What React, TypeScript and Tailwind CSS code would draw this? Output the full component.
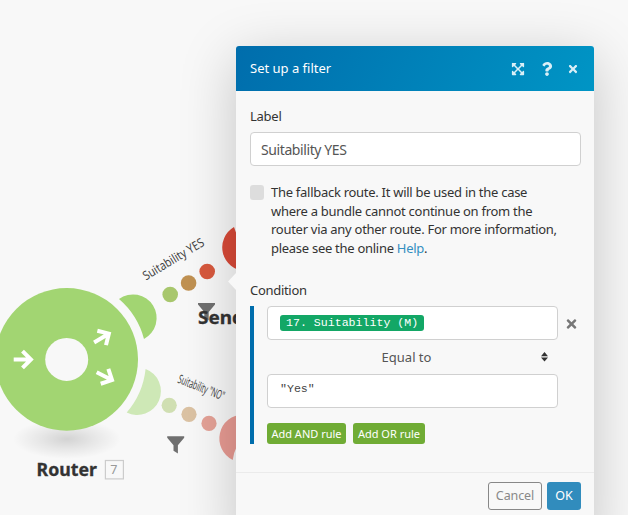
import React from "react";
import { FaExpandArrowsAlt, FaQuestion, FaTimes } from "react-icons/fa";

function Funnel({ x, y }: { x: number; y: number }) {
  return (
    <path
      transform={`translate(${x} ${y})`}
      d="M0 0H17V1.6L10.7 9V17.2L6.3 14.6V9L0 1.6Z"
      fill="#707070"
    />
  );
}

function Arrow({ transform }: { transform: string }) {
  return (
    <path
      transform={transform}
      d="M-10 0H7M-1.2 -8.4L7.2 0L-1.2 8.4"
      fill="none"
      stroke="#fff"
      strokeWidth="4"
    />
  );
}

function Scenario() {
  return (
    <svg
      className="block h-[515px] w-[628px] font-['Noto_Sans',sans-serif]"
      viewBox="0 0 628 515"
    >
      <defs>
        <radialGradient id="ground">
          <stop offset="0" stopColor="#000" stopOpacity=".15" />
          <stop offset=".5" stopColor="#000" stopOpacity=".07" />
          <stop offset="1" stopColor="#000" stopOpacity="0" />
        </radialGradient>
      </defs>
      <ellipse cx="67" cy="439" rx="54" ry="20" fill="url(#ground)" />
      <circle cx="66.7" cy="359.4" r="71.3" fill="#a2d572" />
      <circle cx="66.7" cy="359.4" r="21.5" fill="#f8f8f8" />
      <Arrow transform="translate(23.7 359.5)" />
      <Arrow transform="translate(102.7 337.3) rotate(-31)" />
      <Arrow transform="translate(105.6 376.8) rotate(27)" />

      <path d="M119 299A23.65 23.65 0 1 1 144 339A79.6 79.6 0 0 0 119 299Z" fill="#a2d572" />
      <path d="M145.6 369A23.74 23.74 0 1 1 126.7 412.5A79.6 79.6 0 0 0 145.6 369Z" fill="#cee8b6" />

      <circle cx="170.2" cy="294.5" r="7.8" fill="#a8c76d" />
      <circle cx="188.6" cy="283" r="7.8" fill="#c09152" />
      <circle cx="207.2" cy="271.5" r="7.8" fill="#d8593e" />
      <circle cx="169.2" cy="405.3" r="7.6" fill="#d0dfb2" />
      <circle cx="189" cy="414.3" r="7.6" fill="#dbc2a3" />
      <circle cx="209" cy="423.4" r="7.6" fill="#e5a297" />

      <path d="M234 227A23.6 23.6 0 0 0 245 271V247Q238 240 234 227Z" fill="#d94a38" />
      <path d="M243 414.5A24 24 0 0 0 232.7 460Q233.5 453 237 446L246 430Z" fill="#e89b93" />

      <Funnel x={198} y={303} />
      <Funnel x={167.2} y={436.2} />

      <g fill="#444" fontSize="12.5">
        <text transform="translate(146 280.5) rotate(-31)" textLength="69" lengthAdjust="spacingAndGlyphs">
          Suitability YES
        </text>
        <text transform="translate(177 382.5) rotate(21.5)" textLength="49" lengthAdjust="spacingAndGlyphs">
          Suitability "NO"
        </text>
      </g>
      <g fill="#333" stroke="#333" strokeWidth=".3" fontSize="18.3" fontWeight="700">
        <text x="198" y="323.5" textLength="46" lengthAdjust="spacingAndGlyphs">Send</text>
        <text x="36.5" y="475.5" textLength="60.5" lengthAdjust="spacingAndGlyphs">Router</text>
      </g>
      <rect x="105.4" y="460.5" width="18" height="18.4" fill="none" stroke="#ccc" strokeWidth="1.2" />
      <text x="110.2" y="474.3" fontSize="12.5" fill="#999">7</text>
    </svg>
  );
}

function FilterPanel() {
  return (
    <section className="absolute left-[236px] top-[46px] flex h-[500px] w-[358px] flex-col rounded-[3px] bg-[#f8f8f8] text-[13px] text-[#333] shadow-[0_12px_56px_rgba(0,0,0,0.21)]">
      <span className="absolute -left-[8px] top-[227px] h-[17px] w-[8px] bg-[#f8f8f8] [clip-path:polygon(100%_0,0_50%,100%_100%)]" />
      <header className="flex h-[45px] shrink-0 items-center rounded-t-[3px] bg-[linear-gradient(117deg,#006dac,#0095c5)] pl-[14px] pr-[15px] text-white">
        <h1 className="flex-1">Set up a filter</h1>
        <div className="flex items-center text-[#d9eff7]">
          <FaExpandArrowsAlt className="mr-[15px] h-[14px] w-[14px]" />
          <FaQuestion className="mr-[13px] h-[14px] w-[14px]" />
          <FaTimes className="h-[12px] w-[12px]" />
        </div>
      </header>

      <div className="flex h-[382px] shrink-0 flex-col border-b border-[#ebebeb] pl-[14px]">
        <label className="mt-[16px] h-[18px] leading-[18px] tracking-[-0.25px]">Label</label>
        <div className="mt-[7px] flex h-[34px] w-[331px] items-center rounded-[4px] border border-[#d0d0d0] bg-white px-[10px] text-[14px] tracking-[-0.4px] text-[#555]">
          Suitability YES
        </div>

        <div className="mt-[17px] flex">
          <span className="mt-[2px] h-[15px] w-[14px] shrink-0 rounded-[3px] bg-[#ddd]" />
          <p className="ml-[7px] whitespace-nowrap leading-[18.6px] tracking-[-0.28px]">
            The fallback route. It will be used in the case
            <br />
            where a bundle cannot continue on from the
            <br />
            router via any other route. For more information,
            <br />
            please see the online <a className="text-[#338fc1]">Help</a>.
          </p>
        </div>

        <h2 className="mt-[24px] h-[18px] leading-[18px] tracking-[-0.3px]">Condition</h2>
        <div className="mt-[7px] flex h-[138px] border-l-4 border-[#006dac] pl-[13px]">
          <div className="w-[291px]">
            <div className="flex h-[34px] items-start rounded-[4px] border border-[#d0d0d0] bg-white pl-[12px] pt-[8px]">
              <span className="h-[16px] w-[144px] whitespace-nowrap rounded-[3px] bg-[#13a766] pl-[6px] font-['Liberation_Mono',monospace] text-[11.6px] leading-[16px] text-white">
                17. Suitability (M)
              </span>
            </div>
            <div className="flex h-[34px] items-center pr-[9px] text-[#555]">
              <span className="flex-1 pl-[5px] text-center">Equal to</span>
              <svg className="h-[10px] w-[8px]" viewBox="0 0 8 10" fill="#333">
                <path d="M3.5 0L7 4.2H0ZM3.5 9.6L7 5.6H0Z" />
              </svg>
            </div>
            <div className="h-[34px] rounded-[4px] border border-[#d0d0d0] bg-white pl-[12px] pt-[5px] font-['Liberation_Mono',monospace] text-[11.6px] leading-[17px] text-[#444]">
              "Yes"
            </div>
            <div className="mt-[15px] flex gap-[7px] text-[11px] text-white">
              <button className="h-[21px] w-[79px] whitespace-nowrap rounded-[3px] bg-[#70ac35] leading-[21px]">
                Add AND rule
              </button>
              <button className="h-[21px] w-[72px] whitespace-nowrap rounded-[3px] bg-[#70ac35] leading-[21px]">
                Add OR rule
              </button>
            </div>
          </div>
          <FaTimes className="ml-[6px] mt-[11px] h-[14px] w-[15px] text-[#777]" />
        </div>
      </div>

      <footer className="flex justify-end gap-[5px] pr-[13px] pt-[9px] text-[12.5px]">
        <button className="h-[28px] w-[54px] rounded-[3px] border border-[#888] tracking-[-0.1px] text-[#888]">Cancel</button>
        <button className="h-[28px] w-[34px] rounded-[3px] bg-[#318cbd] text-white">OK</button>
      </footer>
    </section>
  );
}

export default function App() {
  return (
    <main className="relative h-[515px] w-[628px] overflow-hidden bg-[#f8f8f8] font-['Noto_Sans',sans-serif]">
      <Scenario />
      <FilterPanel />
    </main>
  );
}
